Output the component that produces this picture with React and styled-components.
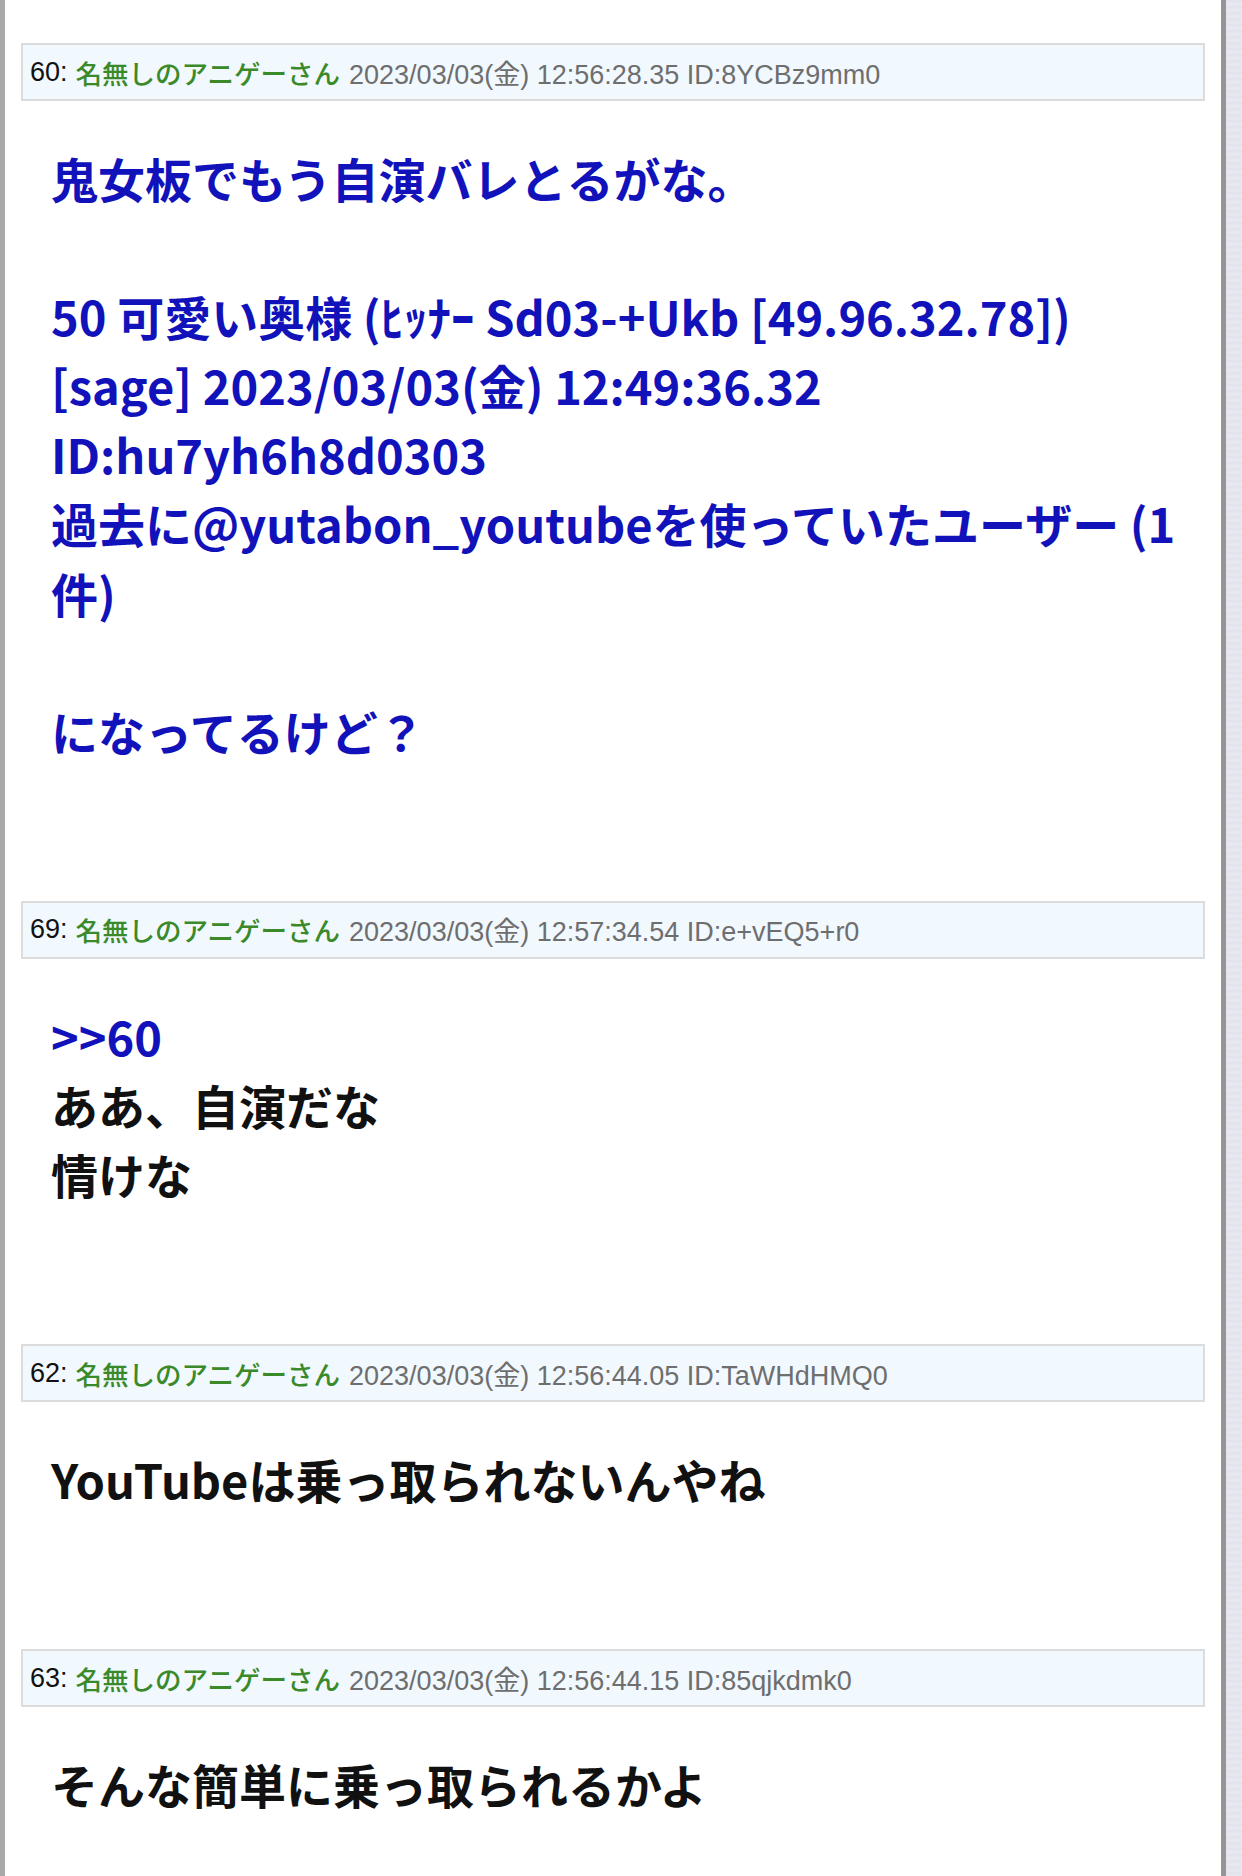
import React from "react";
import styled, { createGlobalStyle } from "styled-components";

const GlobalStyle = createGlobalStyle`
  html, body {
    margin: 0;
    padding: 0;
    background: #e7e6ef;
  }
`;

const Page = styled.div`
  display: flex;
  min-height: 1876px;
  background: repeating-linear-gradient(
    0deg,
    #e9e8f1 0px,
    #e3e2ec 3px,
    #ebeaf2 6px
  );
`;

const Column = styled.div`
  width: 1184px;
  flex-shrink: 0;
  background: #ffffff;
  border-left: 5px solid #a9a9a9;
  border-right: 5px solid #959595;
  padding: 43px 16px 0 16px;
  box-sizing: content-box;
`;

const Post = styled.div`
  padding-bottom: 136px;
`;

const Header = styled.div`
  height: 54px;
  display: flex;
  align-items: center;
  padding: 0 7px;
  background: #f1f8fe;
  border: 2px solid #dcdcdc;
  font-family: "Liberation Sans", "Noto Sans CJK JP", sans-serif;
  font-size: 27px;
  color: #6e6e6e;
  white-space: nowrap;
`;

const Num = styled.span`
  color: #111111;
`;

const Name = styled.span`
  color: #3a8a2a;
  margin: 0 9px 0 8px;
  font-family: "Noto Sans CJK JP", sans-serif;
  font-weight: 500;
  font-size: 26.5px;
`;

const Body = styled.div`
  padding: 42px 0 0 30px;
  font-family: "Noto Sans CJK JP", sans-serif;
  font-weight: 700;
  font-size: 47px;
  line-height: 69.1px;
  color: ${(p) => (p.$blue ? "#1212bb" : "#111111")};
`;

const Line = styled.div`
  white-space: nowrap;
  min-height: 69.1px;
  color: ${(p) => (p.$blue ? "#1212bb" : "inherit")};
`;

const posts = [
  {
    no: 60,
    date: "2023/03/03(金) 12:56:28.35 ID:8YCBz9mm0",
    blue: true,
    lines: [
      "鬼女板でもう自演バレとるがな。",
      "",
      "50 可愛い奥様 (ﾋｯﾅｰ Sd03-+Ukb [49.96.32.78])",
      "[sage] 2023/03/03(金) 12:49:36.32",
      "ID:hu7yh6h8d0303",
      "過去に@yutabon_youtubeを使っていたユーザー (1",
      "件)",
      "",
      "になってるけど？",
    ],
  },
  {
    no: 69,
    date: "2023/03/03(金) 12:57:34.54 ID:e+vEQ5+r0",
    lines: [{ text: ">>60", blue: true }, "ああ、自演だな", "情けな"],
  },
  {
    no: 62,
    date: "2023/03/03(金) 12:56:44.05 ID:TaWHdHMQ0",
    lines: ["YouTubeは乗っ取られないんやね"],
  },
  {
    no: 63,
    date: "2023/03/03(金) 12:56:44.15 ID:85qjkdmk0",
    lines: ["そんな簡単に乗っ取られるかよ"],
  },
];

const App = () => {
  return (
    <>
      <GlobalStyle />
      <Page>
        <Column>
          {posts.map((post) => (
            <Post key={post.no}>
              <Header>
                <Num>{post.no}:</Num>
                <Name>名無しのアニゲーさん</Name>
                {post.date}
              </Header>
              <Body $blue={post.blue}>
                {post.lines.map((l, i) =>
                  typeof l === "string" ? (
                    <Line key={i}>{l}</Line>
                  ) : (
                    <Line key={i} $blue={l.blue}>
                      {l.text}
                    </Line>
                  )
                )}
              </Body>
            </Post>
          ))}
        </Column>
      </Page>
    </>
  );
};

export default App;
